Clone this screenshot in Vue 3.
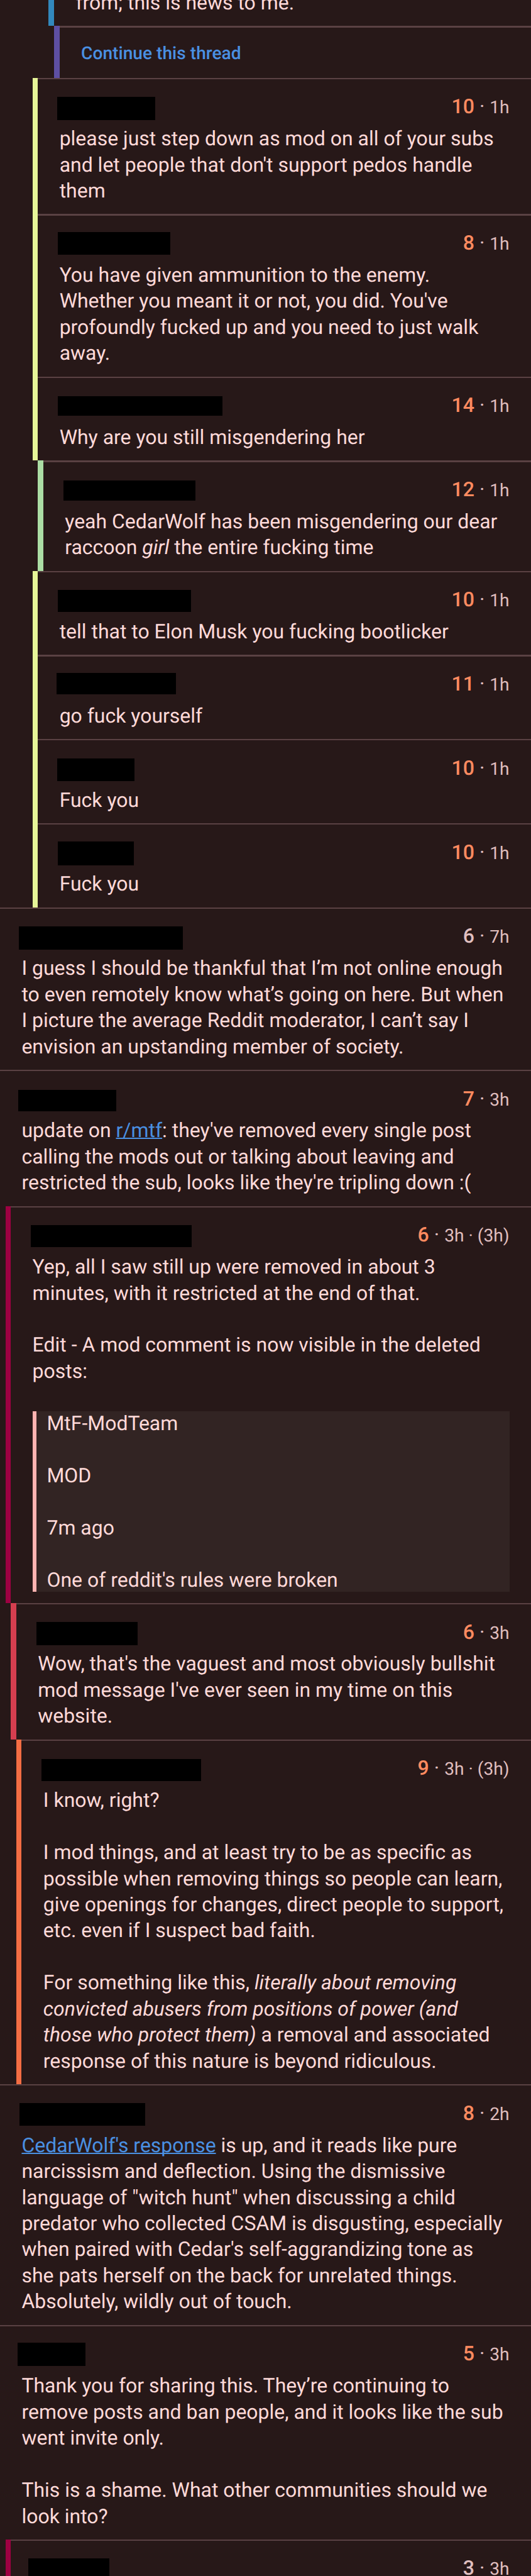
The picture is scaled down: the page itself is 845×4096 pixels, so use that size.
<script setup>
import { ref } from 'vue'

// Reply colors by depth (depth 0 has no bar)
const barColors = {
  1: '#9e0142',
  2: '#d53e4f',
  3: '#f46d43',
  6: '#e6f598',
  7: '#abdda4',
  9: '#3288bd',
  10: '#5e4fa2'
}

// name: [left, top, width, height] of the redacted user name
// text: list of paragraphs, each one a list of plain or styled pieces
const comments = ref([
  {
    depth: 6, score: 10, hot: true, time: '1h', name: [-5, 39, 200, 47],
    text: [[{ t: "please just step down as mod on all of your subs and let people that don't support pedos handle them" }]]
  },
  {
    depth: 6, score: 8, hot: true, time: '1h', name: [-4, 37, 229, 46],
    text: [[{ t: "You have given ammunition to the enemy. Whether you meant it or not, you did. You've profoundly fucked up and you need to just walk away." }]]
  },
  {
    depth: 6, score: 14, hot: true, time: '1h', name: [-3, 40, 334, 40],
    text: [[{ t: 'Why are you still misgendering her' }]]
  },
  {
    depth: 7, score: 12, hot: true, time: '1h', name: [-3, 41, 269, 41],
    text: [[
      { t: 'yeah CedarWolf has been misgendering our dear raccoon ' },
      { t: 'girl', style: 'italic' },
      { t: ' the entire fucking time' }
    ]]
  },
  {
    depth: 6, score: 10, hot: true, time: '1h', name: [-4, 39, 271, 45],
    text: [[{ t: 'tell that to Elon Musk you fucking bootlicker' }]]
  },
  {
    depth: 6, score: 11, hot: true, time: '1h', name: [-6, 37, 243, 43],
    text: [[{ t: 'go fuck yourself' }]]
  },
  {
    depth: 6, score: 10, hot: true, time: '1h', name: [-5, 39, 157, 47],
    text: [[{ t: 'Fuck you' }]]
  },
  {
    depth: 6, score: 10, hot: true, time: '1h', name: [-4, 37, 155, 49],
    text: [[{ t: 'Fuck you' }]]
  },
  {
    depth: 0, score: 6, hot: false, time: '7h', name: [-6, 39, 334, 47],
    text: [[{ t: 'I guess I should be thankful that I’m not online enough to even remotely know what’s going on here. But when I picture the average Reddit moderator, I can’t say I envision an upstanding member of society.' }]]
  },
  {
    depth: 0, score: 7, hot: true, time: '3h', name: [-7, 41, 199, 43],
    text: [[
      { t: 'update on ' },
      { t: 'r/mtf', style: 'link' },
      { t: ": they've removed every single post calling the mods out or talking about leaving and restricted the sub, looks like they're tripling down :(" }
    ]]
  },
  {
    depth: 1, score: 6, hot: true, time: '3h', edited: '3h', name: [-3, 39, 327, 45],
    text: [
      [{ t: 'Yep, all I saw still up were removed in about 3 minutes, with it restricted at the end of that.' }],
      [{ t: 'Edit - A mod comment is now visible in the deleted posts:' }]
    ],
    quote: ['MtF-ModTeam', 'MOD', '7m ago', "One of reddit's rules were broken"]
  },
  {
    depth: 2, score: 6, hot: true, time: '3h', name: [-3, 39, 206, 47],
    text: [[{ t: "Wow, that's the vaguest and most obviously bullshit mod message I've ever seen in my time on this website." }]]
  },
  {
    depth: 3, score: 9, hot: true, time: '3h', edited: '3h', name: [-4, 40, 325, 45],
    text: [
      [{ t: 'I know, right?' }],
      [{ t: 'I mod things, and at least try to be as specific as possible when removing things so people can learn, give openings for changes, direct people to support, etc. even if I suspect bad faith.' }],
      [
        { t: 'For something like this, ' },
        { t: 'literally about removing convicted abusers from positions of power (and those who protect them)', style: 'italic' },
        { t: ' a removal and associated response of this nature is beyond ridiculous.' }
      ]
    ]
  },
  {
    depth: 0, score: 8, hot: true, time: '2h', name: [-4, 38, 255, 46],
    text: [[
      { t: "CedarWolf's response", style: 'link' },
      { t: " is up, and it reads like pure narcissism and deflection. Using the dismissive language of \"witch hunt\" when discussing a child predator who collected CSAM is disgusting, especially when paired with Cedar's self-aggrandizing tone as she pats herself on the back for unrelated things. Absolutely, wildly out of touch." }
    ]]
  },
  {
    depth: 0, score: 5, hot: true, time: '3h', name: [-8, 36, 138, 48],
    text: [
      [{ t: 'Thank you for sharing this. They’re continuing to remove posts and ban people, and it looks like the sub went invite only.' }],
      [{ t: 'This is a shame. What other communities should we look into?' }]
    ]
  },
  {
    depth: 1, score: 3, hot: false, time: '3h', name: [-8, 39, 165, 47],
    text: []
  }
])

// 1rem is 10 units of a 1080 wide screen
const rem = (n) => n / 10 + 'rem'

const barStyle = (depth) => ({
  marginLeft: rem(depth * 11),
  backgroundColor: barColors[depth]
})

const nameStyle = ([left, top, width, height]) => ({
  marginLeft: rem(left),
  marginTop: rem(top - 3),
  width: rem(width),
  height: rem(height)
})
</script>

<template>
  <main class="thread">
    <!-- End of the comment that is scrolled off the top -->
    <article class="row cut">
      <div class="bar" :style="barStyle(9)"></div>
      <div class="main">
        <p class="content">from; this is news to me.</p>
      </div>
    </article>

    <article class="row more">
      <div class="bar" :style="barStyle(10)"></div>
      <div class="main">
        <div class="divider"></div>
        <a class="continue">Continue this thread</a>
      </div>
    </article>

    <article v-for="(c, i) in comments" :key="i" class="row">
      <div v-if="c.depth" class="bar" :style="barStyle(c.depth)"></div>
      <div class="main">
        <div class="divider"></div>
        <header class="head">
          <span class="name" :style="nameStyle(c.name)"></span>
          <span class="meta">
            <span class="score" :class="{ hot: c.hot }">{{ c.score }}</span><span class="dot">&nbsp;·&nbsp;</span><span>{{ c.time }}</span><span v-if="c.edited">&nbsp;·&nbsp;({{ c.edited }})</span>
          </span>
        </header>
        <div class="content">
          <p v-for="(p, j) in c.text" :key="j"><span v-for="(s, k) in p" :key="k" :class="s.style">{{ s.t }}</span></p>
          <blockquote v-if="c.quote">
            <p v-for="q in c.quote" :key="q">{{ q }}</p>
          </blockquote>
        </div>
      </div>
    </article>
  </main>
</template>

<style>
html {
  font-size: calc(100vw / 108);
  background-color: #271818;
}
</style>

<style scoped>
.thread {
  height: 523.5rem;
  overflow: hidden;
  background-color: #271818;
  color: #ffdad9;
  font-family: Roboto, "Liberation Sans", sans-serif;
  font-size: 4.085rem;
  line-height: 5.3rem;
  text-rendering: geometricPrecision;
}
p,
blockquote {
  margin: 0;
}
.row {
  display: flex;
}
.bar {
  flex: none;
  width: 1.1rem;
}
.main {
  flex: 1;
  min-width: 0;
}
.divider {
  height: 0.3rem;
  background-color: #5a4143;
}
/* Header: redacted name on the left, score and age on the right */
.head {
  display: flex;
  justify-content: space-between;
  align-items: flex-start;
  height: 9.48rem;
  padding: 0 4.4rem;
}
.name {
  flex: none;
  background-color: #000;
}
.meta {
  padding-top: 2.98rem;
  color: #e0bfbf;
  font-size: 3.6rem;
  white-space: nowrap;
}
.score,
.dot {
  font-size: 4.1rem;
}
.score {
  font-weight: 500;
}
.hot {
  color: #ff8b60;
}
/* Comment text */
.content {
  padding: 0 4.4rem 2.02rem;
}
.content p + p {
  margin-top: 5.3rem;
}
.italic {
  font-style: italic;
}
.link {
  color: #4a90e2;
  text-decoration: underline;
  text-decoration-thickness: 0.2rem;
  text-decoration-skip-ink: none;
}
/* The quote box is a bit tighter than its lines */
blockquote {
  display: flow-root;
  margin: 5.42rem 0 0.23rem;
  padding-left: 2.15rem;
  border-left: 0.8rem solid #ffb3b1;
  background-color: #322423;
}
blockquote p:first-child {
  margin-top: -0.12rem;
}
blockquote p:last-child {
  margin-bottom: -0.23rem;
}
/* Partial first comment and the link under it */
.cut {
  height: 5.3rem;
  overflow: hidden;
}
.cut .main {
  display: flex;
  align-items: flex-end;
}
.more {
  height: 10.5rem;
}
.continue {
  display: block;
  padding: 2.6rem 4.4rem 0;
  color: #4a90e2;
  font-size: 3.6rem;
  font-weight: 500;
}
</style>
